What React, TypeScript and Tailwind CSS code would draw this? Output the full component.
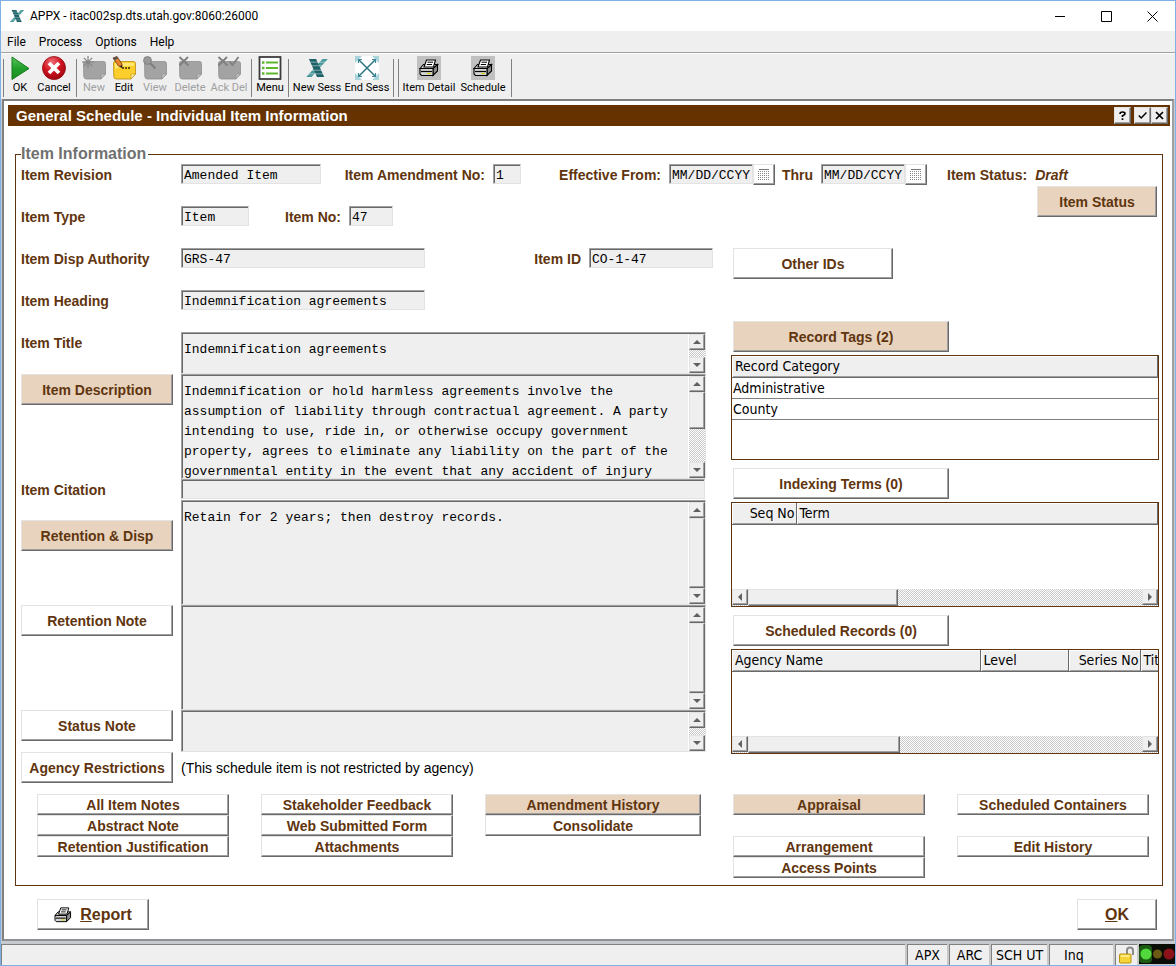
import { useId } from "react";
import type { ReactNode } from "react";
import clsx from "clsx";

const raised =
  "border border-t-[#e3e3e3] border-l-[#e3e3e3] border-r-[#696969] border-b-[#696969] shadow-[inset_-1px_-1px_#a0a0a0]";
const sunken =
  "border border-t-[#a0a0a0] border-l-[#a0a0a0] border-r-[#e3e3e3] border-b-[#e3e3e3] shadow-[inset_1px_1px_#696969] bg-[#efefef]";
const mono = "font-['Liberation_Mono',monospace] text-[13px] font-normal text-black";
const tahoma = "font-['DejaVu_Sans_Condensed','DejaVu_Sans',sans-serif]";
const chrome = "font-['Roboto',sans-serif]";
const checker = "bg-[repeating-conic-gradient(#ffffff_0_25%,#c8c8c8_0_50%)] bg-size-[2px_2px]";

/* ---------- icons ---------- */

function AppxLogo({ className }: { className: string }) {
  return (
    <svg viewBox="0 0 24 20" className={className} aria-hidden="true">
      <path d="M18 0H24L6 20H0Z" fill="#4a9a9c" />
      <path d="M3 0H11L20 20H12Z" fill="#1d6268" />
      <path d="M0 3.500H24M0 7.500H24M0 12.500H24M0 16.500H24" stroke="#efefef" strokeWidth="1" strokeOpacity=".55" />
    </svg>
  );
}

function PlayIcon() {
  return (
    <svg viewBox="0 0 24 24" className="size-6" aria-hidden="true">
      <defs>
        <linearGradient id="play" x1="0" y1="0" x2="0" y2="1">
          <stop offset="0" stopColor="#58c65a" />
          <stop offset=".5" stopColor="#21a02b" />
          <stop offset="1" stopColor="#1b8f24" />
        </linearGradient>
      </defs>
      <path d="M4 1L21 12.500L4 23.500Z" fill="url(#play)" stroke="#157a1d" strokeWidth="1" strokeLinejoin="round" />
    </svg>
  );
}

function CancelIcon() {
  return (
    <svg viewBox="0 0 24 24" className="size-6" aria-hidden="true">
      <defs>
        <radialGradient id="stop" cx=".4" cy=".25" r=".8">
          <stop offset="0" stopColor="#f07078" />
          <stop offset=".5" stopColor="#d01420" />
          <stop offset="1" stopColor="#9c0610" />
        </radialGradient>
      </defs>
      <circle cx="12" cy="12" r="11.500" fill="url(#stop)" stroke="#8e0a12" strokeWidth=".8" />
      <path d="M7 7L17 17M17 7L7 17" stroke="#fff" strokeWidth="3.800" />
    </svg>
  );
}

type NoteKind = "new" | "edit" | "view" | "delete" | "ack";

function NoteIcon({ kind }: { kind: NoteKind }) {
  const edit = kind === "edit";
  return (
    <svg viewBox="0 0 24 24" className="size-6" aria-hidden="true">
      <path
        d="M3 5.500H21.500Q23.500 5.500 23.500 7.500V18L19 23H4.500Q2 23 1.800 20.500L1.500 7Q1.500 5.500 3 5.500Z"
        fill={edit ? "#fbce2c" : "#a3a3a3"}
        stroke={edit ? "#b98a10" : "#8f8f8f"}
        strokeWidth=".8"
      />
      <path
        d="M19 23V19.500Q19 18 20.500 18H23.500Z"
        fill={edit ? "#fff0a8" : "#c2c2c2"}
        stroke={edit ? "#b98a10" : "#8f8f8f"}
        strokeWidth=".6"
      />
      {edit && (
        <>
          <path d="M3 7H22V10Q12 9 3 13Z" fill="#ffe873" />
          <path d="M10 12H19" stroke="#3a2a00" strokeWidth="1.600" strokeDasharray="2 1" />
          <path d="M1 2L5 0.500L10 8V11.500L6.500 10Z" fill="#e8842c" stroke="#6b3410" strokeWidth=".8" />
          <path d="M1 2L5 .5L6.200 2.500L2.500 4.200Z" fill="#555" />
          <path d="M10 9V11.500L7.500 10.400Z" fill="#222" />
        </>
      )}
      {kind === "new" && (
        <path d="M6 0V12M0 6H12M1.800 1.800L10.200 10.200M10.200 1.800L1.800 10.200" stroke="#858585" strokeWidth="1.200" />
      )}
      {kind === "view" && (
        <>
          <path d="M6.500 6.500L12.500 12.500" stroke="#7f7f7f" strokeWidth="2.200" />
          <circle cx="4.500" cy="4.500" r="3.900" fill="#999" stroke="#808080" strokeWidth="1" />
        </>
      )}
      {(kind === "delete" || kind === "ack") && (
        <path d="M1.500 1L10.500 9.500M10 1L1.500 9.500" stroke="#7f7f7f" strokeWidth="1.800" />
      )}
      {kind === "ack" && <path d="M12.500 5.500L15.500 9L21.500 1" stroke="#7f7f7f" strokeWidth="1.800" fill="none" />}
    </svg>
  );
}

function MenuIcon() {
  return (
    <svg viewBox="0 0 24 24" className="size-6" aria-hidden="true">
      <rect x="1.500" y="1" width="21" height="22" fill="#fff" stroke="#3c3c3c" strokeWidth="1.800" />
      <path d="M4 6.500H6.500M4 12H6.500M4 17.500H6.500" stroke="#5eb82e" strokeWidth="2.400" />
      <path d="M8 6.500H20M8 12H20M8 17.500H20" stroke="#5eb82e" strokeWidth="2" />
    </svg>
  );
}

function EndSessionIcon() {
  return (
    <svg viewBox="0 0 24 24" className="size-6" aria-hidden="true">
      <rect width="24" height="24" fill="#fff" />
      <path d="M0 0H7L0 7ZM24 0H17L24 7ZM0 24H7L0 17ZM24 24H17L24 17Z" fill="#a9d4dc" />
      <path d="M4 4L20 20M20 4L4 20" stroke="#2c7684" strokeWidth="1.500" />
      <path
        d="M3.500 7V3.500H7M17 3.500H20.500V7M3.500 17V20.500H7M17 20.500H20.500V17"
        fill="none"
        stroke="#3d8896"
        strokeWidth="1.200"
      />
    </svg>
  );
}

function Printer({ className }: { className: string }) {
  return (
    <svg viewBox="0 0 20 18" className={className} aria-hidden="true">
      <path d="M14 9.500L18.500 5.500V12L14 16.500Z" fill="#8c8c8c" stroke="#000" strokeWidth="1.100" />
      <path d="M1 9.500L4.500 5.500H18.500L14 9.500Z" fill="#dcdcdc" stroke="#000" strokeWidth="1.100" />
      <path d="M5 8L7.500 1H16.500L14.500 8Z" fill="#fff" stroke="#000" strokeWidth="1.100" />
      <path d="M8.500 3.200H14M7.800 5.500H13" stroke="#000" strokeWidth="1" />
      <path d="M1 9.500H14V16.500H2.500L1 15Z" fill="#d4d4d4" stroke="#000" strokeWidth="1.100" />
      <path d="M2 12.500H13" stroke="#000" strokeWidth="1.200" />
      <path d="M8 14.500H12" stroke="#d8d020" strokeWidth="1.200" />
    </svg>
  );
}

function PrinterTile() {
  return (
    <span className="flex size-6 items-center justify-center bg-[#c0c0c0]">
      <Printer className="h-[18px] w-5" />
    </span>
  );
}

function CalendarIcon() {
  return (
    <svg viewBox="0 0 12 12" className="size-3" shapeRendering="crispEdges" aria-hidden="true">
      <path d="M1 .5H11" stroke="#777" />
      <path d="M0 2.500H12M0 4.500H12M0 6.500H12M0 8.500H12M0 10.500H12" stroke="#8a8a8a" strokeDasharray="1 1" />
    </svg>
  );
}

function LockIcon() {
  return (
    <svg viewBox="0 0 18 18" className="size-[18px]" aria-hidden="true">
      <path d="M9 8V4.500Q9 1.500 12 1.500T15 4.500V9" fill="none" stroke="#8a8a8a" strokeWidth="2" />
      <rect x="1.500" y="8" width="11.500" height="9" rx="1" fill="#f5d43a" stroke="#b8920c" />
      <path d="M3 10H11.500" stroke="#fff3a0" strokeWidth="1.500" />
    </svg>
  );
}

function TrafficLights() {
  return (
    <svg viewBox="0 0 36 20" className="h-5 w-9" aria-hidden="true">
      <rect width="36" height="20" fill="#0a0d05" />
      <rect x="0" y="1" width="13" height="18" rx="4" fill="#1c5a14" />
      <circle cx="7" cy="10" r="5.500" fill="#52d83c" />
      <circle cx="18.500" cy="10" r="4.500" fill="#6b5a14" />
      <circle cx="30" cy="10" r="5.500" fill="#8c121a" />
    </svg>
  );
}

/* ---------- controls ---------- */

function Btn({ children, className, tan, small }: { children: ReactNode; className?: string; tan?: boolean; small?: boolean }) {
  return (
    <button
      type="button"
      className={clsx(
        raised,
        "flex shrink-0 items-center justify-center font-bold whitespace-nowrap text-[#5f350f]",
        small ? "h-[21px]" : "h-[31px]",
        tan ? "bg-[#e8d3be]" : "bg-white",
        className,
      )}
    >
      {children}
    </button>
  );
}

function Field({ label, value, labelClass, width }: { label: string; value: string; labelClass: string; width: string }) {
  const id = useId();
  return (
    <>
      <label htmlFor={id} className={clsx("shrink-0 whitespace-nowrap", labelClass)}>
        {label}
      </label>
      <input
        id={id}
        readOnly
        defaultValue={value}
        className={clsx(sunken, mono, "h-5 shrink-0 rounded-none pt-[3px] pl-0.5 outline-none", width)}
      />
    </>
  );
}

function CalendarButton({ label }: { label: string }) {
  return (
    <button type="button" aria-label={label} className={clsx(raised, "flex h-[21px] w-[22px] shrink-0 items-center justify-center bg-white")}>
      <CalendarIcon />
    </button>
  );
}

function Arrow({ dir }: { dir: "up" | "down" | "left" | "right" }) {
  const d = { up: "M4 2L8 6H0Z", down: "M0 2H8L4 6Z", left: "M6 0V8L2 4Z", right: "M2 0L6 4L2 8Z" }[dir];
  return (
    <button
      type="button"
      tabIndex={-1}
      aria-label={`Scroll ${dir}`}
      className={clsx(raised, "flex size-4 shrink-0 items-center justify-center bg-[#efefef]")}
    >
      <svg viewBox="0 0 8 8" className="size-2" aria-hidden="true">
        <path d={d} fill="#606060" />
      </svg>
    </button>
  );
}

function Memo({ label, value, height, thumb }: { label: string; value: string; height: string; thumb?: string }) {
  return (
    <div className={clsx(sunken, "flex w-[525px] shrink-0 pt-px", height)}>
      <textarea
        aria-label={label}
        readOnly
        wrap="off"
        defaultValue={value}
        className={clsx(mono, "h-full flex-1 resize-none overflow-hidden border-r border-white bg-transparent pt-1.5 pl-0.5 leading-5 outline-none")}
      />
      <div className={clsx("flex w-4 shrink-0 flex-col", checker)}>
        <Arrow dir="up" />
        {thumb && <div className={clsx(raised, "bg-[#efefef]", thumb)} />}
        <div className="flex-1" />
        <Arrow dir="down" />
      </div>
    </div>
  );
}

function HScroll({ thumb }: { thumb: string }) {
  return (
    <div className={clsx("mt-auto flex h-[17px] shrink-0", checker)}>
      <Arrow dir="left" />
      <div className={clsx(raised, "bg-[#efefef]", thumb)} />
      <div className="flex-1" />
      <Arrow dir="right" />
    </div>
  );
}

type Column = { name: string; width?: string; right?: boolean };

function List({ columns, rows, thumb, tableClass }: { columns: Column[]; rows: string[][]; thumb?: string; tableClass: string }) {
  return (
    <div className={clsx("mt-[3px] mb-2 flex h-[105px] flex-col overflow-hidden border border-[#5f350f] bg-white text-black", tahoma)}>
      <table className={clsx("table-fixed border-collapse", tableClass)}>
        <thead>
          <tr className="h-[21px]">
            {columns.map((c) => (
              <th
                key={c.name}
                className={clsx(
                  "overflow-hidden border-r border-b border-r-[#696969] border-b-[#696969] bg-[#efefef] px-[3px] leading-[19px] font-normal whitespace-nowrap shadow-[inset_1px_1px_#fff,inset_0_-1px_#a0a0a0]",
                  c.right ? "pr-px text-right" : "text-left",
                  c.width,
                )}
              >
                {c.name}
              </th>
            ))}
          </tr>
        </thead>
        <tbody>
          {rows.map((r) => (
            <tr key={r[0]} className="h-[21px] border-b border-[#808080]">
              {r.map((cell) => (
                <td key={cell} className="p-0 pl-px leading-5">
                  {cell}
                </td>
              ))}
            </tr>
          ))}
        </tbody>
      </table>
      {thumb && <HScroll thumb={thumb} />}
    </div>
  );
}

function ToolButton({ icon, label, width, disabled }: { icon: ReactNode; label: string; width: string; disabled?: boolean }) {
  return (
    <button
      type="button"
      disabled={disabled}
      className={clsx(
        "flex shrink-0 flex-col items-center text-[11px] leading-[15px] whitespace-nowrap",
        disabled ? "text-[#a0a0a0]" : "text-black",
        width,
      )}
    >
      {icon}
      {label}
    </button>
  );
}

function Separator() {
  return <div className="mx-0.5 h-[38px] w-px shrink-0 self-center bg-[#808080]" />;
}

/* ---------- sections ---------- */

function WindowBar() {
  return (
    <div className={clsx("flex h-[30px] items-center bg-white pr-[17px] pl-2", chrome)}>
      <AppxLogo className="h-3 w-4" />
      <span className="ml-[5px] text-xs text-black">APPX - itac002sp.dts.utah.gov:8060:26000</span>
      <div className="ml-auto flex gap-[35px]">
        {[
          ["Minimize", "M0 5.500H10"],
          ["Maximize", "M.5 .5H10.500V10.500H.5Z"],
          ["Close", "M.5 .5L10.500 10.500M10.500 .5L.5 10.500"],
        ].map(([name, d]) => (
          <button key={name} type="button" aria-label={name}>
            <svg viewBox="0 0 11 11" className="size-[11px]" aria-hidden="true">
              <path d={d} fill="none" stroke="#000" strokeWidth="1" />
            </svg>
          </button>
        ))}
      </div>
    </div>
  );
}

function MenuBar() {
  return (
    <nav className={clsx("flex h-[22px] items-center gap-[13px] border-b border-[#a0a0a0] bg-[#efefef] pl-1.5 text-xs text-black", chrome)}>
      {["File", "Process", "Options", "Help"].map((m) => (
        <button key={m} type="button">
          {m}
        </button>
      ))}
    </nav>
  );
}

function Toolbar() {
  return (
    <div className={clsx("flex h-[46px] items-start border-t border-white bg-[#efefef] pt-0.5", chrome)}>
      <Separator />
      <ToolButton icon={<PlayIcon />} label="OK" width="w-7" />
      <ToolButton icon={<CancelIcon />} label="Cancel" width="w-10" />
      <Separator />
      <ToolButton icon={<NoteIcon kind="new" />} label="New" width="w-[30px]" disabled />
      <ToolButton icon={<NoteIcon kind="edit" />} label="Edit" width="w-[30px]" />
      <ToolButton icon={<NoteIcon kind="view" />} label="View" width="w-8" disabled />
      <ToolButton icon={<NoteIcon kind="delete" />} label="Delete" width="w-[38px]" disabled />
      <ToolButton icon={<NoteIcon kind="ack" />} label="Ack Del" width="w-10" disabled />
      <Separator />
      <ToolButton icon={<MenuIcon />} label="Menu" width="w-8" />
      <Separator />
      <ToolButton
        icon={
          <span className="flex size-6 items-center justify-center">
            <AppxLogo className="h-[18px] w-6" />
          </span>
        }
        label="New Sess"
        width="w-[52px]"
      />
      <ToolButton icon={<EndSessionIcon />} label="End Sess" width="w-12" />
      <Separator />
      <Separator />
      <ToolButton icon={<PrinterTile />} label="Item Detail" width="w-[56px]" />
      <ToolButton icon={<PrinterTile />} label="Schedule" width="w-[52px]" />
      <Separator />
    </div>
  );
}

function TitleBar() {
  const box = clsx(raised, "flex size-[17px] items-center justify-center bg-[#efefef] text-black");
  return (
    <header className="flex h-[21px] items-center bg-[#663300] pr-0.5 pl-2 text-white">
      <h1 className="text-[15px] leading-5 font-bold">General Schedule - Individual Item Information</h1>
      <div className="ml-auto flex">
        <button type="button" aria-label="Help" className={clsx(box, "mr-[3px]")}>
          <svg viewBox="0 0 9 9" className="size-[9px]" aria-hidden="true">
            <path d="M2 3Q2 1 4.500 1T7 2.800Q7 4 4.500 4.800V6M4.500 7.300V9" fill="none" stroke="#000" strokeWidth="1.700" />
          </svg>
        </button>
        <button type="button" aria-label="Accept" className={box}>
          <svg viewBox="0 0 9 9" className="size-[9px]" aria-hidden="true">
            <path d="M.8 4.500L3.200 7L8.500 1.500" fill="none" stroke="#000" strokeWidth="1.500" />
          </svg>
        </button>
        <button type="button" aria-label="Close form" className={box}>
          <svg viewBox="0 0 9 9" className="size-[9px]" aria-hidden="true">
            <path d="M1 1L8 8M8 1L1 8" stroke="#000" strokeWidth="1.700" />
          </svg>
        </button>
      </div>
    </header>
  );
}

const description = `Indemnification or hold harmless agreements involve the
assumption of liability through contractual agreement. A party
intending to use, ride in, or otherwise occupy government
property, agrees to eliminate any liability on the part of the
governmental entity in the event that any accident of injury`;

function StatusCell({ children, className }: { children?: ReactNode; className: string }) {
  return (
    <div className={clsx("flex h-[21px] items-center border-t border-l border-[#808080] bg-[#efefef]", className)}>{children}</div>
  );
}

export default function App() {
  return (
    <div className="flex min-h-screen flex-col border border-[#7fb0e6] bg-[#c3cbd4] font-['Liberation_Sans',sans-serif] text-sm text-[#5f350f]">
      <WindowBar />
      <MenuBar />
      <Toolbar />
      <main className="mx-px flex min-w-0 flex-1 flex-col border-2 border-t-[#808080] border-r-[#a0a0a0] border-b-[#909090] border-l-[#808080] bg-white pt-1 pr-0.5 pb-2 pl-1">
        <TitleBar />
        <fieldset className="mx-[7px] mt-[19px] min-w-0 border border-[#5f350f] pr-[3px] pb-[7px] pl-[5px]">
          <legend className="h-[18px] pr-0.5 text-base leading-[18px] font-bold text-[#707070]">Item Information</legend>

          <div className="flex pt-px">
            <div className="flex flex-col">
              <div className="flex h-[42px] items-start leading-[22px] font-bold">
                <Field label="Item Revision" value="Amended Item" labelClass="w-40" width="w-[140px]" />
                <Field label="Item Amendment No:" value="1" labelClass="mr-2 w-[164px] text-right" width="w-7" />
                <Field label="Effective From:" value="MM/DD/CCYY" labelClass="mr-2 w-[140px] text-right" width="w-[84px]" />
                <CalendarButton label="Choose start date" />
                <Field label="Thru" value="MM/DD/CCYY" labelClass="mr-2 w-[38px] text-right" width="w-[84px]" />
                <CalendarButton label="Choose end date" />
              </div>
              <div className="flex h-[42px] items-start leading-[22px] font-bold">
                <Field label="Item Type" value="Item" labelClass="w-40" width="w-[68px]" />
                <Field label="Item No:" value="47" labelClass="mr-2 w-[92px] text-right" width="w-11" />
              </div>
            </div>
            <div className="ml-5 font-bold">
              <div className="flex h-[22px] gap-2 leading-[22px]">
                <span>Item Status:</span>
                <em>Draft</em>
              </div>
              <Btn tan className="ml-[90px] w-[120px]">
                Item Status
              </Btn>
            </div>
          </div>

          <div className="flex">
            <div className="flex w-[710px] shrink-0 flex-col">
              <div className="flex h-[42px] items-start leading-[22px] font-bold">
                <Field label="Item Disp Authority" value="GRS-47" labelClass="w-40" width="w-[244px]" />
                <Field label="Item ID" value="CO-1-47" labelClass="mr-2 w-[156px] text-right" width="w-[124px]" />
              </div>
              <div className="flex h-[42px] items-start leading-[22px] font-bold">
                <Field label="Item Heading" value="Indemnification agreements" labelClass="w-40" width="w-[244px]" />
              </div>
              <div className="flex items-start">
                <span className="w-40 leading-[22px] font-bold">Item Title</span>
                <Memo label="Item Title" value="Indemnification agreements" height="h-[42px]" />
              </div>
              <div className="flex items-start">
                <div className="w-40">
                  <Btn tan className="w-[152px]">
                    Item Description
                  </Btn>
                </div>
                <Memo label="Item Description" value={description} height="h-[105px]" thumb="h-[37px]" />
              </div>
              <div className="flex h-[21px] items-start leading-[22px] font-bold">
                <Field label="Item Citation" value="" labelClass="w-40" width="w-[524px]" />
              </div>
              <div className="flex items-start">
                <div className="w-40 pt-5">
                  <Btn tan className="w-[152px]">
                    Retention &amp; Disp
                  </Btn>
                </div>
                <Memo label="Retention and Disposition" value="Retain for 2 years; then destroy records." height="h-[105px]" thumb="flex-[1000]" />
              </div>
              <div className="flex items-start">
                <div className="w-40">
                  <Btn className="w-[152px]">Retention Note</Btn>
                </div>
                <Memo label="Retention Note" value="" height="h-[105px]" thumb="flex-[1000]" />
              </div>
              <div className="flex items-start">
                <div className="w-40">
                  <Btn className="w-[152px]">Status Note</Btn>
                </div>
                <Memo label="Status Note" value="" height="h-[42px]" />
              </div>
              <div className="flex items-center">
                <div className="w-40">
                  <Btn className="w-[152px]">Agency Restrictions</Btn>
                </div>
                <span className="text-black">(This schedule item is not restricted by agency)</span>
              </div>
            </div>

            <div className="flex min-w-0 flex-1 flex-col">
              <Btn className="mb-[42px] ml-0.5 w-40">Other IDs</Btn>
              <Btn tan className="ml-0.5 w-[216px]">
                Record Tags (2)
              </Btn>
              <List tableClass="w-full" columns={[{ name: "Record Category" }]} rows={[["Administrative"], ["County"]]} />
              <Btn className="ml-0.5 w-[216px]">Indexing Terms (0)</Btn>
              <List
                tableClass="w-full"
                columns={[{ name: "Seq No", width: "w-16", right: true }, { name: "Term" }]}
                rows={[]}
                thumb="w-[150px]"
              />
              <Btn className="ml-0.5 w-[216px]">Scheduled Records (0)</Btn>
              <List
                tableClass="w-[600px]"
                columns={[
                  { name: "Agency Name", width: "w-[248px]" },
                  { name: "Level", width: "w-[88px]" },
                  { name: "Series No", width: "w-[72px]", right: true },
                  { name: "Title" },
                ]}
                rows={[]}
                thumb="w-[152px]"
              />
            </div>
          </div>

          <div className="mt-[11px] ml-4 grid grid-cols-[192px_192px_216px_192px_192px] items-start gap-x-8">
            <div>
              <Btn small className="w-full">All Item Notes</Btn>
              <Btn small className="w-full">Abstract Note</Btn>
              <Btn small className="w-full">Retention Justification</Btn>
            </div>
            <div>
              <Btn small className="w-full">Stakeholder Feedback</Btn>
              <Btn small className="w-full">Web Submitted Form</Btn>
              <Btn small className="w-full">Attachments</Btn>
            </div>
            <div>
              <Btn small tan className="w-full">Amendment History</Btn>
              <Btn small className="w-full">Consolidate</Btn>
            </div>
            <div>
              <Btn small tan className="mb-[21px] w-full">Appraisal</Btn>
              <Btn small className="w-full">Arrangement</Btn>
              <Btn small className="w-full">Access Points</Btn>
            </div>
            <div>
              <Btn small className="mb-[21px] w-full">Scheduled Containers</Btn>
              <Btn small className="w-full">Edit History</Btn>
            </div>
          </div>
        </fieldset>

        <div className="mt-[13px] flex justify-between pr-[13px] pl-[29px] text-base">
          <Btn className="w-28">
            <Printer className="mr-2 h-4 w-[18px]" />
            <span>
              <u>R</u>eport
            </span>
          </Btn>
          <Btn className="w-20">
            <span>
              <u>O</u>K
            </span>
          </Btn>
        </div>
      </main>

      <footer className={clsx("mt-0.5 flex gap-0.5 bg-[#c8c8c8] pt-px text-black", tahoma)}>
        <StatusCell className="flex-1" />
        <StatusCell className="w-10 justify-center">APX</StatusCell>
        <StatusCell className="w-10 justify-center">ARC</StatusCell>
        <StatusCell className="w-[56px] justify-center">SCH UT</StatusCell>
        <StatusCell className="w-16 pl-3.5">Inq</StatusCell>
        <StatusCell className="w-[22px] justify-center">
          <LockIcon />
        </StatusCell>
        <TrafficLights />
      </footer>
    </div>
  );
}
